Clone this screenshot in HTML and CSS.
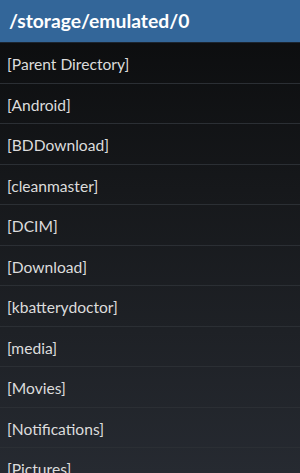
FILE: index.html
```html
<!DOCTYPE html>
<html>
<head>
<meta charset="utf-8">
<link rel="stylesheet" href="styles.css">
</head>
<body>
<div class="app">
  <div class="header">/storage/emulated/0</div>
  <ul class="list">
    <li class="row">[Parent Directory]</li>
    <li class="row">[Android]</li>
    <li class="row">[BDDownload]</li>
    <li class="row">[cleanmaster]</li>
    <li class="row">[DCIM]</li>
    <li class="row">[Download]</li>
    <li class="row">[kbatterydoctor]</li>
    <li class="row">[media]</li>
    <li class="row">[Movies]</li>
    <li class="row">[Notifications]</li>
    <li class="row">[Pictures]</li>
  </ul>
</div>
</body>
</html>
```
FILE: styles.css
```css
html, body {
  margin: 0;
  padding: 0;
  height: 100%;
  overflow: hidden;
}
body {
  background: #0b0c0d;
  font-family: Lato, "Open Sans", sans-serif;
}
.app {
  height: 473px;
  display: flex;
  flex-direction: column;
  background: linear-gradient(to bottom, #0a0b0c 0%, #16181b 40%, #262a31 100%);
}
.header {
  height: 42px;
  flex: none;
  background: #336699;
  border-bottom: 1px solid #1c2530;
  color: #ffffff;
  font-weight: bold;
  font-size: 19.3px;
  line-height: 42px;
  padding-left: 9px;
  box-sizing: content-box;
}
.list {
  list-style: none;
  margin: 0;
  padding: 0;
}
.row {
  height: 39.5px;
  border-bottom: 1px solid #2b2f34;
  color: #dcdcdc;
  font-size: 15.6px;
  line-height: 43px;
  padding-left: 7px;
  box-sizing: content-box;
  overflow: hidden;
}
```
